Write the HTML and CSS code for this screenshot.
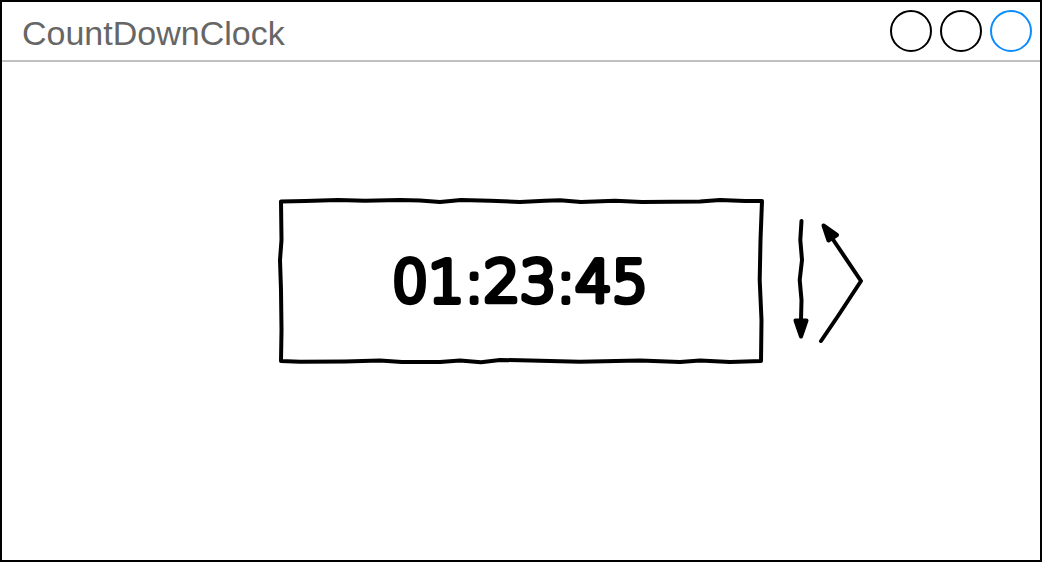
FILE: index.html
```html
<!DOCTYPE html>
<html lang="en">
<head>
<meta charset="utf-8">
<title>CountDownClock</title>
<link rel="stylesheet" href="styles.css">
</head>
<body>
<div class="window">
  <header class="titlebar">
    <h1 class="title">CountDownClock</h1>
    <div class="controls">
      <button class="control" type="button" aria-label="Minimize"></button>
      <button class="control" type="button" aria-label="Maximize"></button>
      <button class="control control-primary" type="button" aria-label="Close"></button>
    </div>
  </header>
  <main class="stage">
    <svg class="clock" viewBox="276 196 490 170" role="timer">
      <path class="line" d="M281 201.5L305 201L338 200L365 200.8L400 200L420 200.5L440 202L461 200L490 200.8L520 202L545 200.7L560 200.2L581 202L615 200.8L642 202L700 201.5L720 200L745 201L762 201L760.5 240L759.7 280L761.5 320L761 361L730 362L700 360.5L680 362L640 360.5L580 361.7L520 360.3L500 360L481 362.2L460 360.6L440 362L402 362L380 360.5L345 361.5L300 361.8L281 361L281.5 330L281 290L280 260L281.5 240Z"/>
      <text class="time" x="520" y="302">01:23:45</text>
    </svg>
    <svg class="arrows" viewBox="790 210 80 142" aria-hidden="true">
      <path class="line" d="M801.5 221L800.3 240L802 260L799.7 280L801.5 300L801 320"/>
      <path class="head" d="M795.5 320.500L806.500 320.500L801 336.500Z"/>
      <path class="line" d="M821 341L838 316L861 281L832 238"/>
      <path class="head" d="M823.500 225.500L837 235L828.500 240.500Z"/>
    </svg>
  </main>
</div>
</body>
</html>
```
FILE: styles.css
```css
* {
  box-sizing: border-box;
}

body {
  margin: 0;
  background: #fff;
  font-family: "Liberation Sans", Arial, sans-serif;
}

.window {
  display: flex;
  flex-direction: column;
  min-height: 100vh;
  border: 2px solid #000;
}

.titlebar {
  display: flex;
  align-items: center;
  justify-content: space-between;
  padding: 8px 8px 8px 20px;
  border-bottom: 2px solid #c0c0c0;
}

.title {
  margin: 0;
  padding-top: 4px;
  color: #666;
  font-size: 34px;
  font-weight: 400;
  line-height: 38px;
}

.controls {
  display: flex;
  gap: 8px;
}

.control {
  width: 42px;
  height: 42px;
  padding: 0;
  border: 2px solid #000;
  border-radius: 50%;
  background: transparent;
}

.control-primary {
  border-color: #0a8cff;
}

.stage {
  flex: 1;
  display: grid;
  grid-template-columns: 1fr auto 1fr;
  align-items: center;
  column-gap: 24px;
  padding-bottom: 60px;
}

.clock {
  grid-column: 2;
  width: 490px;
}

.arrows {
  width: 80px;
}

.line {
  fill: none;
  stroke: #000;
  stroke-width: 4px;
  stroke-linecap: round;
  stroke-linejoin: round;
}

.head {
  stroke: #000;
  stroke-width: 4px;
  stroke-linejoin: round;
}

.time {
  font-family: "DejaVu Sans Light", "DejaVu Sans", sans-serif;
  font-size: 57px;
  font-weight: 200;
  text-anchor: middle;
  stroke: #000;
  stroke-width: 6px;
  stroke-linejoin: round;
}
```
